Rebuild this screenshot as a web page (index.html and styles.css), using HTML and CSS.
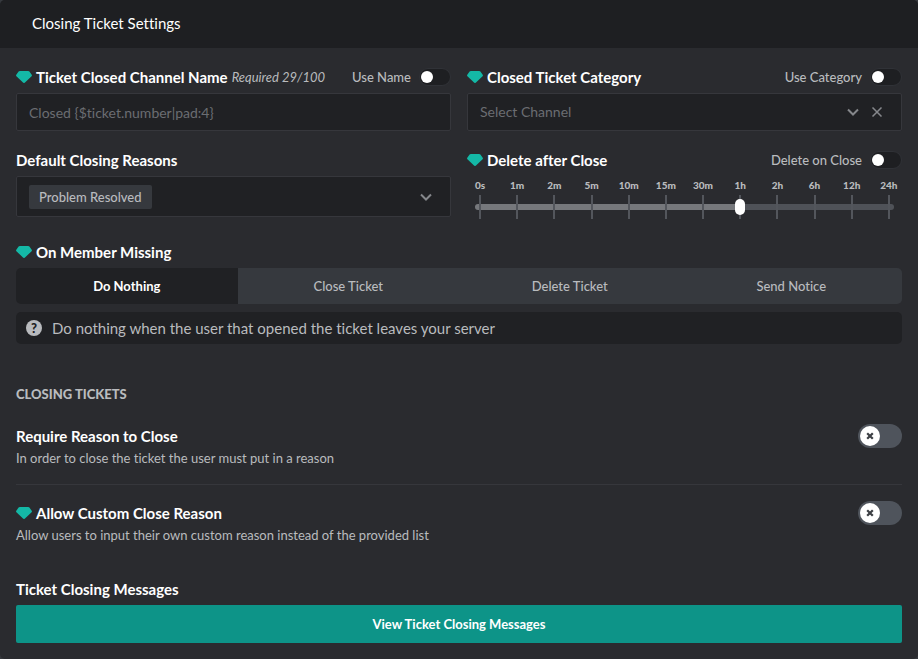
FILE: index.html
```html
<!DOCTYPE html>
<html lang="en">
<head>
<meta charset="utf-8">
<meta name="viewport" content="width=device-width, initial-scale=1">
<title>Closing Ticket Settings</title>
<link rel="stylesheet" href="styles.css">
</head>
<body>
<svg class="sprite" aria-hidden="true">
  <symbol id="gem" viewBox="0 0 16 12"><path d="M3.8 0h8.4c.5 0 .9.2 1.200.6l2.300 3.100c.4.500.3 1-.1 1.500L9 11.500c-.6.700-1.400.700-2 0L.4 5.200C0 4.700-.1 4.200.3 3.700L2.600.6C2.900.2 3.300 0 3.800 0z"/></symbol>
  <symbol id="chevron" viewBox="0 0 12 8"><path d="M1 1.500 6 6.500l5-5" fill="none" stroke="currentColor" stroke-width="2"/></symbol>
  <symbol id="cross" viewBox="0 0 10 10"><path d="M.5.5l9 9M9.500.5l-9 9" fill="none" stroke="currentColor" stroke-width="1.500"/></symbol>
  <symbol id="cross-bold" viewBox="0 0 10 10"><path d="M1.500 1.500l7 7M8.500 1.500l-7 7" fill="none" stroke="currentColor" stroke-width="2.800"/></symbol>
</svg>
<main class="card">
  <header class="card-header"><h1>Closing Ticket Settings</h1></header>
  <form class="card-body">
    <div class="columns">
      <div class="field">
        <div class="field-head">
          <label class="title" for="name"><svg class="gem"><use href="#gem"/></svg>Ticket Closed Channel Name</label>
          <em class="hint">Required 29/100</em>
          <label class="mini">Use Name <input type="checkbox" class="mini-switch"></label>
        </div>
        <input class="box text" id="name" type="text" placeholder="Closed {$ticket.number|pad:4}">
      </div>
      <div class="field">
        <div class="field-head">
          <label class="title" for="category"><svg class="gem"><use href="#gem"/></svg>Closed Ticket Category</label>
          <label class="mini">Use Category <input type="checkbox" class="mini-switch"></label>
        </div>
        <div class="box picker">
          <select id="category"><option>Select Channel</option></select>
          <svg class="chevron"><use href="#chevron"/></svg>
          <button type="button" class="clear" aria-label="Clear"><svg><use href="#cross"/></svg></button>
        </div>
      </div>
      <div class="field">
        <div class="field-head"><span class="title" id="reasons">Default Closing Reasons</span></div>
        <button type="button" class="box tags" aria-labelledby="reasons" aria-haspopup="listbox">
          <span class="tag">Problem Resolved</span>
          <svg class="chevron"><use href="#chevron"/></svg>
        </button>
      </div>
      <div class="field">
        <div class="field-head">
          <label class="title" for="delay"><svg class="gem"><use href="#gem"/></svg>Delete after Close</label>
          <label class="mini">Delete on Close <input type="checkbox" class="mini-switch"></label>
        </div>
        <div class="slider" style="--fill: 64%">
          <div class="track"></div>
          <ol class="marks">
            <li>0s</li><li>1m</li><li>2m</li><li>5m</li><li>10m</li><li>15m</li><li>30m</li><li>1h</li><li>2h</li><li>6h</li><li>12h</li><li>24h</li>
          </ol>
          <input id="delay" type="range" min="0" max="11" value="7">
        </div>
      </div>
    </div>

    <fieldset class="member">
      <legend class="title"><svg class="gem"><use href="#gem"/></svg>On Member Missing</legend>
      <div class="segments">
        <label><input type="radio" name="missing" checked>Do Nothing</label>
        <label><input type="radio" name="missing">Close Ticket</label>
        <label><input type="radio" name="missing">Delete Ticket</label>
        <label><input type="radio" name="missing">Send Notice</label>
      </div>
    </fieldset>
    <p class="info"><span class="help">?</span>Do nothing when the user that opened the ticket leaves your server</p>

    <h2>Closing Tickets</h2>
    <div class="option">
      <div>
        <label class="title" for="require">Require Reason to Close</label>
        <p>In order to close the ticket the user must put in a reason</p>
      </div>
      <span class="switch"><input id="require" type="checkbox"><svg><use href="#cross-bold"/></svg></span>
    </div>
    <div class="option">
      <div>
        <label class="title" for="custom"><svg class="gem"><use href="#gem"/></svg>Allow Custom Close Reason</label>
        <p>Allow users to input their own custom reason instead of the provided list</p>
      </div>
      <span class="switch"><input id="custom" type="checkbox"><svg><use href="#cross-bold"/></svg></span>
    </div>

    <h3 class="title">Ticket Closing Messages</h3>
    <button type="button" class="primary">View Ticket Closing Messages</button>
  </form>
</main>
</body>
</html>
```
FILE: styles.css
```css
* { box-sizing: border-box; }
body {
  margin: 0;
  background: #36393e;
  color: #b9bbbe;
  font: 13px/20px Lato, "Noto Sans", sans-serif;
  font-variant-ligatures: none;
}
h1, h2, h3, p, ol, fieldset, legend { margin: 0; padding: 0; border: 0; }
button, input, select { font: inherit; font-variant-ligatures: none; color: inherit; margin: 0; }
.sprite { display: none; }

.card { background: #2a2b2f; border-radius: 5px; overflow: hidden; }
.card-header { background: #1e1f22; padding: 11px 32px 13px; }
.card-header h1 { font-size: 15px; line-height: 24px; font-weight: 400; color: #fff; }
.card-body { padding: 16px; }

.columns { display: grid; grid-template-columns: 1fr 1fr; gap: 16px; }
.field { min-width: 0; }
.field-head { display: flex; align-items: center; height: 26px; margin-bottom: 3px; }
.title { display: flex; align-items: center; font-size: 15px; line-height: 24px; font-weight: 700; color: #fff; white-space: nowrap; }
.gem { width: 16px; height: 12px; margin-right: 4px; fill: #14b8a6; }
.hint { margin-left: 4px; white-space: nowrap; }
.mini { display: flex; align-items: center; gap: 8px; margin-left: auto; font-weight: 500; white-space: nowrap; }
.mini-switch {
  appearance: none;
  display: flex;
  align-items: center;
  width: 32px;
  height: 18px;
  padding: 0 1px;
  border: 1px solid #303237;
  border-radius: 9px;
  background: #1e1f22;
}
.mini-switch::before { content: ""; width: 12px; height: 12px; border-radius: 50%; background: #fff; }
.mini-switch:checked { justify-content: flex-end; }

.box { display: flex; align-items: center; width: 100%; background: #202124; border: 1px solid #36373c; border-radius: 2px; padding: 0 12px; }
.text { height: 38px; font-size: 14px; }
.text::placeholder { color: #6b6d72; opacity: 1; }
.picker { height: 38px; gap: 12px; padding-right: 18px; font-size: 14px; }
.picker select { appearance: none; flex: 1; min-width: 0; padding: 0; border: 0; background: none; color: #6b6d72; }
.chevron { width: 12px; height: 8px; color: #85878b; }
.clear { display: flex; padding: 0; border: 0; background: none; color: #85878b; }
.clear svg { width: 12px; height: 10px; }
.tags { height: 41px; justify-content: space-between; padding-right: 18px; }
.tag { background: #36393e; border-radius: 2px; padding: 2px 10px; font-weight: 500; }

.slider { display: grid; align-items: end; margin: 2px 8px 0; }
.slider > * { grid-area: 1 / 1; }
.track { height: 6px; margin-bottom: 9px; border-radius: 3px; background: linear-gradient(to right, #76787c var(--fill), #4f5258 var(--fill)); }
.marks { display: flex; justify-content: space-between; padding: 0 4px; list-style: none; font-size: 10px; line-height: 18px; font-weight: 900; }
.marks li { display: flex; flex-direction: column; align-items: center; width: 2px; white-space: nowrap; }
.marks li::after { content: ""; width: 2px; height: 24px; margin-top: 1px; background: #53565c; }
.slider input { appearance: none; width: 100%; height: 24px; background: none; z-index: 1; }
.slider input::-webkit-slider-thumb { appearance: none; width: 10px; height: 16px; border-radius: 5px; background: #fff; }

.member { margin-top: 21px; }
.member .title { margin-bottom: 4px; }
.segments { display: grid; grid-template-columns: repeat(4, 1fr); border-radius: 5px; overflow: hidden; }
.segments label { display: block; padding: 8px; text-align: center; font-weight: 500; background: #36393e; }
.segments label:has(:checked) { background: #202124; color: #fff; font-weight: 700; }
.segments input { appearance: none; position: absolute; }
.info { display: flex; align-items: center; gap: 10px; margin-top: 8px; padding: 4px 10px; border-radius: 5px; background: #202124; font-size: 15px; line-height: 24px; }
.help { width: 16px; height: 16px; border-radius: 50%; background: #b9bbbe; color: #202124; font-size: 13px; line-height: 16px; font-weight: 900; text-align: center; }

h2 { margin-top: 40px; font-size: 13px; line-height: 20px; font-weight: 900; text-transform: uppercase; }
.option { display: flex; justify-content: space-between; align-items: flex-start; padding: 16px 0; }
.option + .option { border-top: 1px solid #36373c; }
h2 + .option { padding-top: 20px; }
.switch { display: flex; align-items: center; width: 44px; height: 24px; border-radius: 12px; background: #4f545c; }
.switch input { appearance: none; width: 20px; height: 20px; margin-left: 2px; border-radius: 50%; background: #fff; }
.switch svg { width: 8px; height: 8px; margin-left: -14px; color: #3c3f44; pointer-events: none; }
h3.title { margin-top: 16px; margin-bottom: 4px; }
.primary { display: block; width: 100%; padding: 9px; border: 0; border-radius: 2px; background: #0d9488; color: #fff; font-weight: 700; }
```
